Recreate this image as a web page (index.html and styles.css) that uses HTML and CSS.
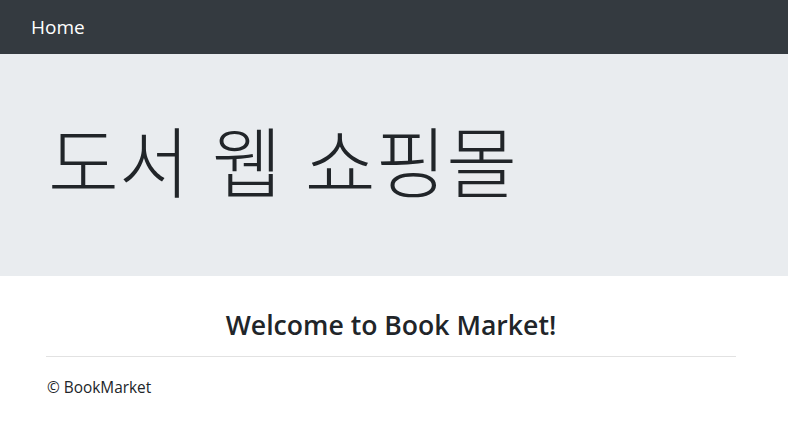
FILE: index.html
```html
<!DOCTYPE html>
<html lang="ko">
<head>
<meta charset="utf-8">
<title>Welcome</title>
<link rel="stylesheet" href="styles.css">
</head>
<body>
<nav class="navbar">
  <div class="nav-container">
    <a class="navbar-brand" href="#">Home</a>
  </div>
</nav>
<div class="jumbotron">
  <div class="container">
    <h1 class="display-3">도서 웹 쇼핑몰</h1>
  </div>
</div>
<main class="container">
  <div class="text-center">
    <h3>Welcome to Book Market!</h3>
  </div>
  <hr>
</main>
<footer class="container">
  <p>&copy; BookMarket</p>
</footer>
</body>
</html>
```

FILE: styles.css
```css
* { box-sizing: border-box; }
body {
  margin: 0;
  font-family: "Open Sans", "Noto Sans CJK KR", sans-serif;
  font-size: 16px;
  line-height: 1.5;
  color: #212529;
  background: #fff;
}
.navbar {
  background: #343a40;
  height: 54px;
  display: flex;
  align-items: center;
  padding: 0 16px;
}
.nav-container {
  padding: 0 15px;
}
.navbar-brand {
  color: #fff;
  text-decoration: none;
  font-size: 19px;
  line-height: 30px;
}
.jumbotron {
  background: #e9ecef;
  height: 222px;
  padding: 59px 0 0 0;
}
.container {
  width: 690px;
  margin-left: 46px;
}
.display-3 {
  margin: 0;
  font-family: "Noto Sans CJK KR", sans-serif;
  font-weight: 300;
  font-size: 77px;
  line-height: 1.2;
  padding-left: 2px;
  word-spacing: 0.5px;
}
main.container {
  padding-top: 32px;
}
.text-center { text-align: center; }
h3 {
  margin: 0 0 0 0;
  font-size: 26.6px;
  font-weight: 600;
  line-height: 34px;
}
hr {
  margin: 14px 0 0 0;
  border: 0;
  border-top: 1px solid #e2e2e2;
}
footer p {
  margin: 19px 0 0 1px;
  font-size: 15.4px;
  line-height: 24px;
}
```
